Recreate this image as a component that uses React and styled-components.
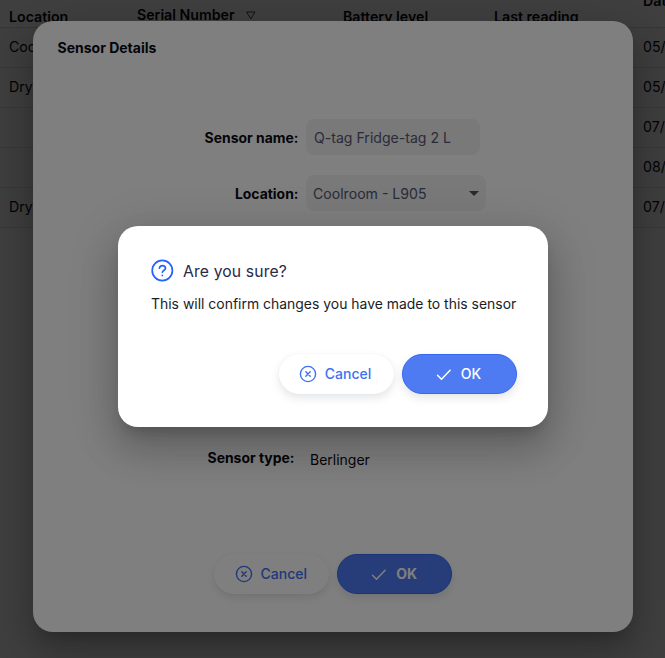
import React from 'react';
import styled, { createGlobalStyle } from 'styled-components';

const GlobalStyle = createGlobalStyle`
  * { box-sizing: border-box; }
  html, body { margin: 0; height: 100%; overflow: hidden; background: #fff; }
  body { font-family: Inter, "Liberation Sans", sans-serif; font-size: 14px; color: #0a0a12; }
`;

const Page = styled.main`
  position: relative;
  height: 658px;
  width: 665px;
  overflow: hidden;
`;

const TableRow = styled.div`
  display: grid;
  grid-template-columns: 128px 206px 151px 149px 120px;
  align-items: center;
  height: 40px;
  padding: 0 0 2px 9px;
  font-size: 14.2px;
  border-bottom: 1px solid #e2e2e6;
  background: #fafafc;
  white-space: nowrap;
`;

const TableHead = styled(TableRow)`
  height: 28px;
  align-items: start;
  font-size: 14.2px;
  font-weight: 600;
  line-height: 16px;
  background: #fff;
  border-bottom-color: #d8d8dc;
`;

const HeadCell = styled.div`
  display: flex;
  align-items: center;
  gap: 11px;
  height: 16px;
  margin-top: ${(p) => p.$top}px;
`;

const Backdrop = styled.div`
  position: absolute;
  inset: 0;
  background: rgba(0, 0, 0, 0.5);
  padding: ${(p) => p.$pad};
`;

const Dialog = styled.section`
  width: ${(p) => p.$width}px;
  height: ${(p) => p.$height}px;
  padding: ${(p) => p.$pad};
  border-radius: 20px;
  background: #fff;
  box-shadow: 0 11px 15px -7px rgba(0, 0, 0, 0.2), 0 24px 38px 3px rgba(0, 0, 0, 0.14),
    0 9px 46px 8px rgba(0, 0, 0, 0.12);
  display: flex;
  flex-direction: column;
`;

const DialogTitle = styled.h2`
  margin: 0;
  font-size: 14px;
  line-height: 20px;
  font-weight: 700;
`;

const Form = styled.div`
  display: flex;
  flex-direction: column;
  padding-top: 61px;
`;

const Field = styled.div`
  display: flex;
  align-items: center;
  height: 36px;
  margin-bottom: ${(p) => p.$after || 0}px;
`;

const Label = styled.div`
  width: ${(p) => p.$width}px;
  padding-top: 2px;
  text-align: right;
  font-weight: 700;
  font-size: 13.95px;
  line-height: 20px;
`;

const Value = styled.div`
  margin-left: 15.5px;
  padding-top: 4px;
  font-size: 14px;
`;

const Input = styled.div`
  display: flex;
  align-items: center;
  justify-content: space-between;
  width: ${(p) => p.$width}px;
  height: 36px;
  margin-left: 7.5px;
  padding: ${(p) => p.$pad};
  border-radius: 8px;
  background: #f2f2f5;
  color: #555770;
  font-size: 14.1px;
`;

const Actions = styled.div`
  display: flex;
  gap: 8px;
  margin-top: auto;
  justify-content: ${(p) => p.$justify};
`;

const Button = styled.button`
  display: flex;
  align-items: center;
  justify-content: center;
  gap: 8px;
  width: 115px;
  height: 40px;
  padding: 0 2px 1px 0;
  border: 1px solid ${(p) => (p.$primary ? '#3568ef' : '#fff')};
  border-radius: 24px;
  background: ${(p) => (p.$primary ? '#4e7bf2' : '#fff')};
  color: ${(p) => (p.$primary ? '#fff' : '#3e70f2')};
  font: ${(p) => (p.$bold ? 700 : 500)} 14px Inter, sans-serif;
  box-shadow: 0 4px 8px rgba(96, 97, 112, 0.16), 0 0 2px rgba(40, 41, 61, 0.04);
`;

const ConfirmHeading = styled.h2`
  display: flex;
  align-items: center;
  gap: 9px;
  margin: 0;
  height: 24px;
  color: #28294b;
  font-size: 15.7px;
  font-weight: 400;
  letter-spacing: 0.15px;
`;

const ConfirmText = styled.p`
  margin: 11px 0 0;
  color: #1c1c28;
  font-size: 13.95px;
  line-height: 20px;
  white-space: nowrap;
`;

const strokeProps = { fill: 'none', stroke: 'currentColor', strokeLinecap: 'round', strokeLinejoin: 'round' };

const SortIcon = () => (
  <svg width="10" height="9" viewBox="0 0 10 9" {...strokeProps}>
    <path d="M1 1h8L5 7.5z" stroke="#3c4560" />
  </svg>
);

const CaretIcon = () => (
  <svg width="10" height="5" viewBox="0 0 10 5">
    <path d="M0 0h10L5 5z" fill="#55555c" />
  </svg>
);

const CrossCircleIcon = () => (
  <svg width="18" height="18" viewBox="0 0 18 18" {...strokeProps} strokeWidth="1.4">
    <circle cx="9" cy="9" r="7.6" />
    <path d="M6.8 6.8l4.4 4.4M11.2 6.8l-4.4 4.4" />
  </svg>
);

const CheckIcon = () => (
  <svg width="18" height="18" viewBox="0 0 18 18" {...strokeProps} strokeWidth="1.5">
    <path d="M2.5 10.2l4 4L15.1 5.2" />
  </svg>
);

const HelpIcon = () => (
  <svg width="23" height="24" viewBox="0 0 23 24" {...strokeProps} stroke="#2463fb" strokeWidth="1.7">
    <circle cx="11.3" cy="11.5" r="10.1" />
    <path d="M8.4 9.1C8.8 7.4 10 6.6 11.4 6.6c1.7 0 3.1 1.1 3.1 2.7 0 2-3 2.4-3.1 3.9M11.3 16.4v.1" />
  </svg>
);

const rows = [
  ['Coolroom', '05/'],
  ['Dry store', '05/'],
  ['', '07/'],
  ['', '08/'],
  ['Dry store', '07/'],
];

const DialogActions = ({ justify, bold }) => (
  <Actions $justify={justify}>
    <Button><CrossCircleIcon />Cancel</Button>
    <Button $primary $bold={bold}><CheckIcon />OK</Button>
  </Actions>
);

export default function App() {
  return (
    <>
      <GlobalStyle />
      <Page>
        <TableHead>
          <HeadCell $top={9}>Location</HeadCell>
          <HeadCell $top={7}>Serial Number <SortIcon /></HeadCell>
          <HeadCell $top={9}>Battery level</HeadCell>
          <HeadCell $top={9}>Last reading</HeadCell>
          <HeadCell $top={-7}>Date</HeadCell>
        </TableHead>
        {rows.map(([location, date], i) => (
          <TableRow key={i}>
            <span>{location}</span><span /><span /><span />
            <span>{date}</span>
          </TableRow>
        ))}

        <Backdrop $pad="21px 0 0 33px">
          <Dialog $width={600} $height={611} $pad="17px 24px 38px 24.5px">
            <DialogTitle>Sensor Details</DialogTitle>
            <Form>
              <Field $after={20}>
                <Label $width={241}>Sensor name:</Label>
                <Input $width={173.5} $pad="0 8px">Q-tag Fridge-tag 2 L</Input>
              </Field>
              <Field $after={187}>
                <Label $width={241}>Location:</Label>
                <Input $width={180} $pad="0 7px">Coolroom - L905 <CaretIcon /></Input>
              </Field>
              <Field $after={5}>
                <Label $width={237}>Battery level:</Label>
              </Field>
              <Field>
                <Label $width={237}>Sensor type:</Label>
                <Value>Berlinger</Value>
              </Field>
            </Form>
            <DialogActions justify="center" bold />
          </Dialog>
        </Backdrop>

        <Backdrop $pad="226px 0 0 118px">
          <Dialog $width={430} $height={200.5} $pad="33px 31.5px 32.5px 33px">
            <ConfirmHeading><HelpIcon />Are you sure?</ConfirmHeading>
            <ConfirmText>This will confirm changes you have made to this sensor</ConfirmText>
            <DialogActions justify="flex-end" />
          </Dialog>
        </Backdrop>
      </Page>
    </>
  );
}
